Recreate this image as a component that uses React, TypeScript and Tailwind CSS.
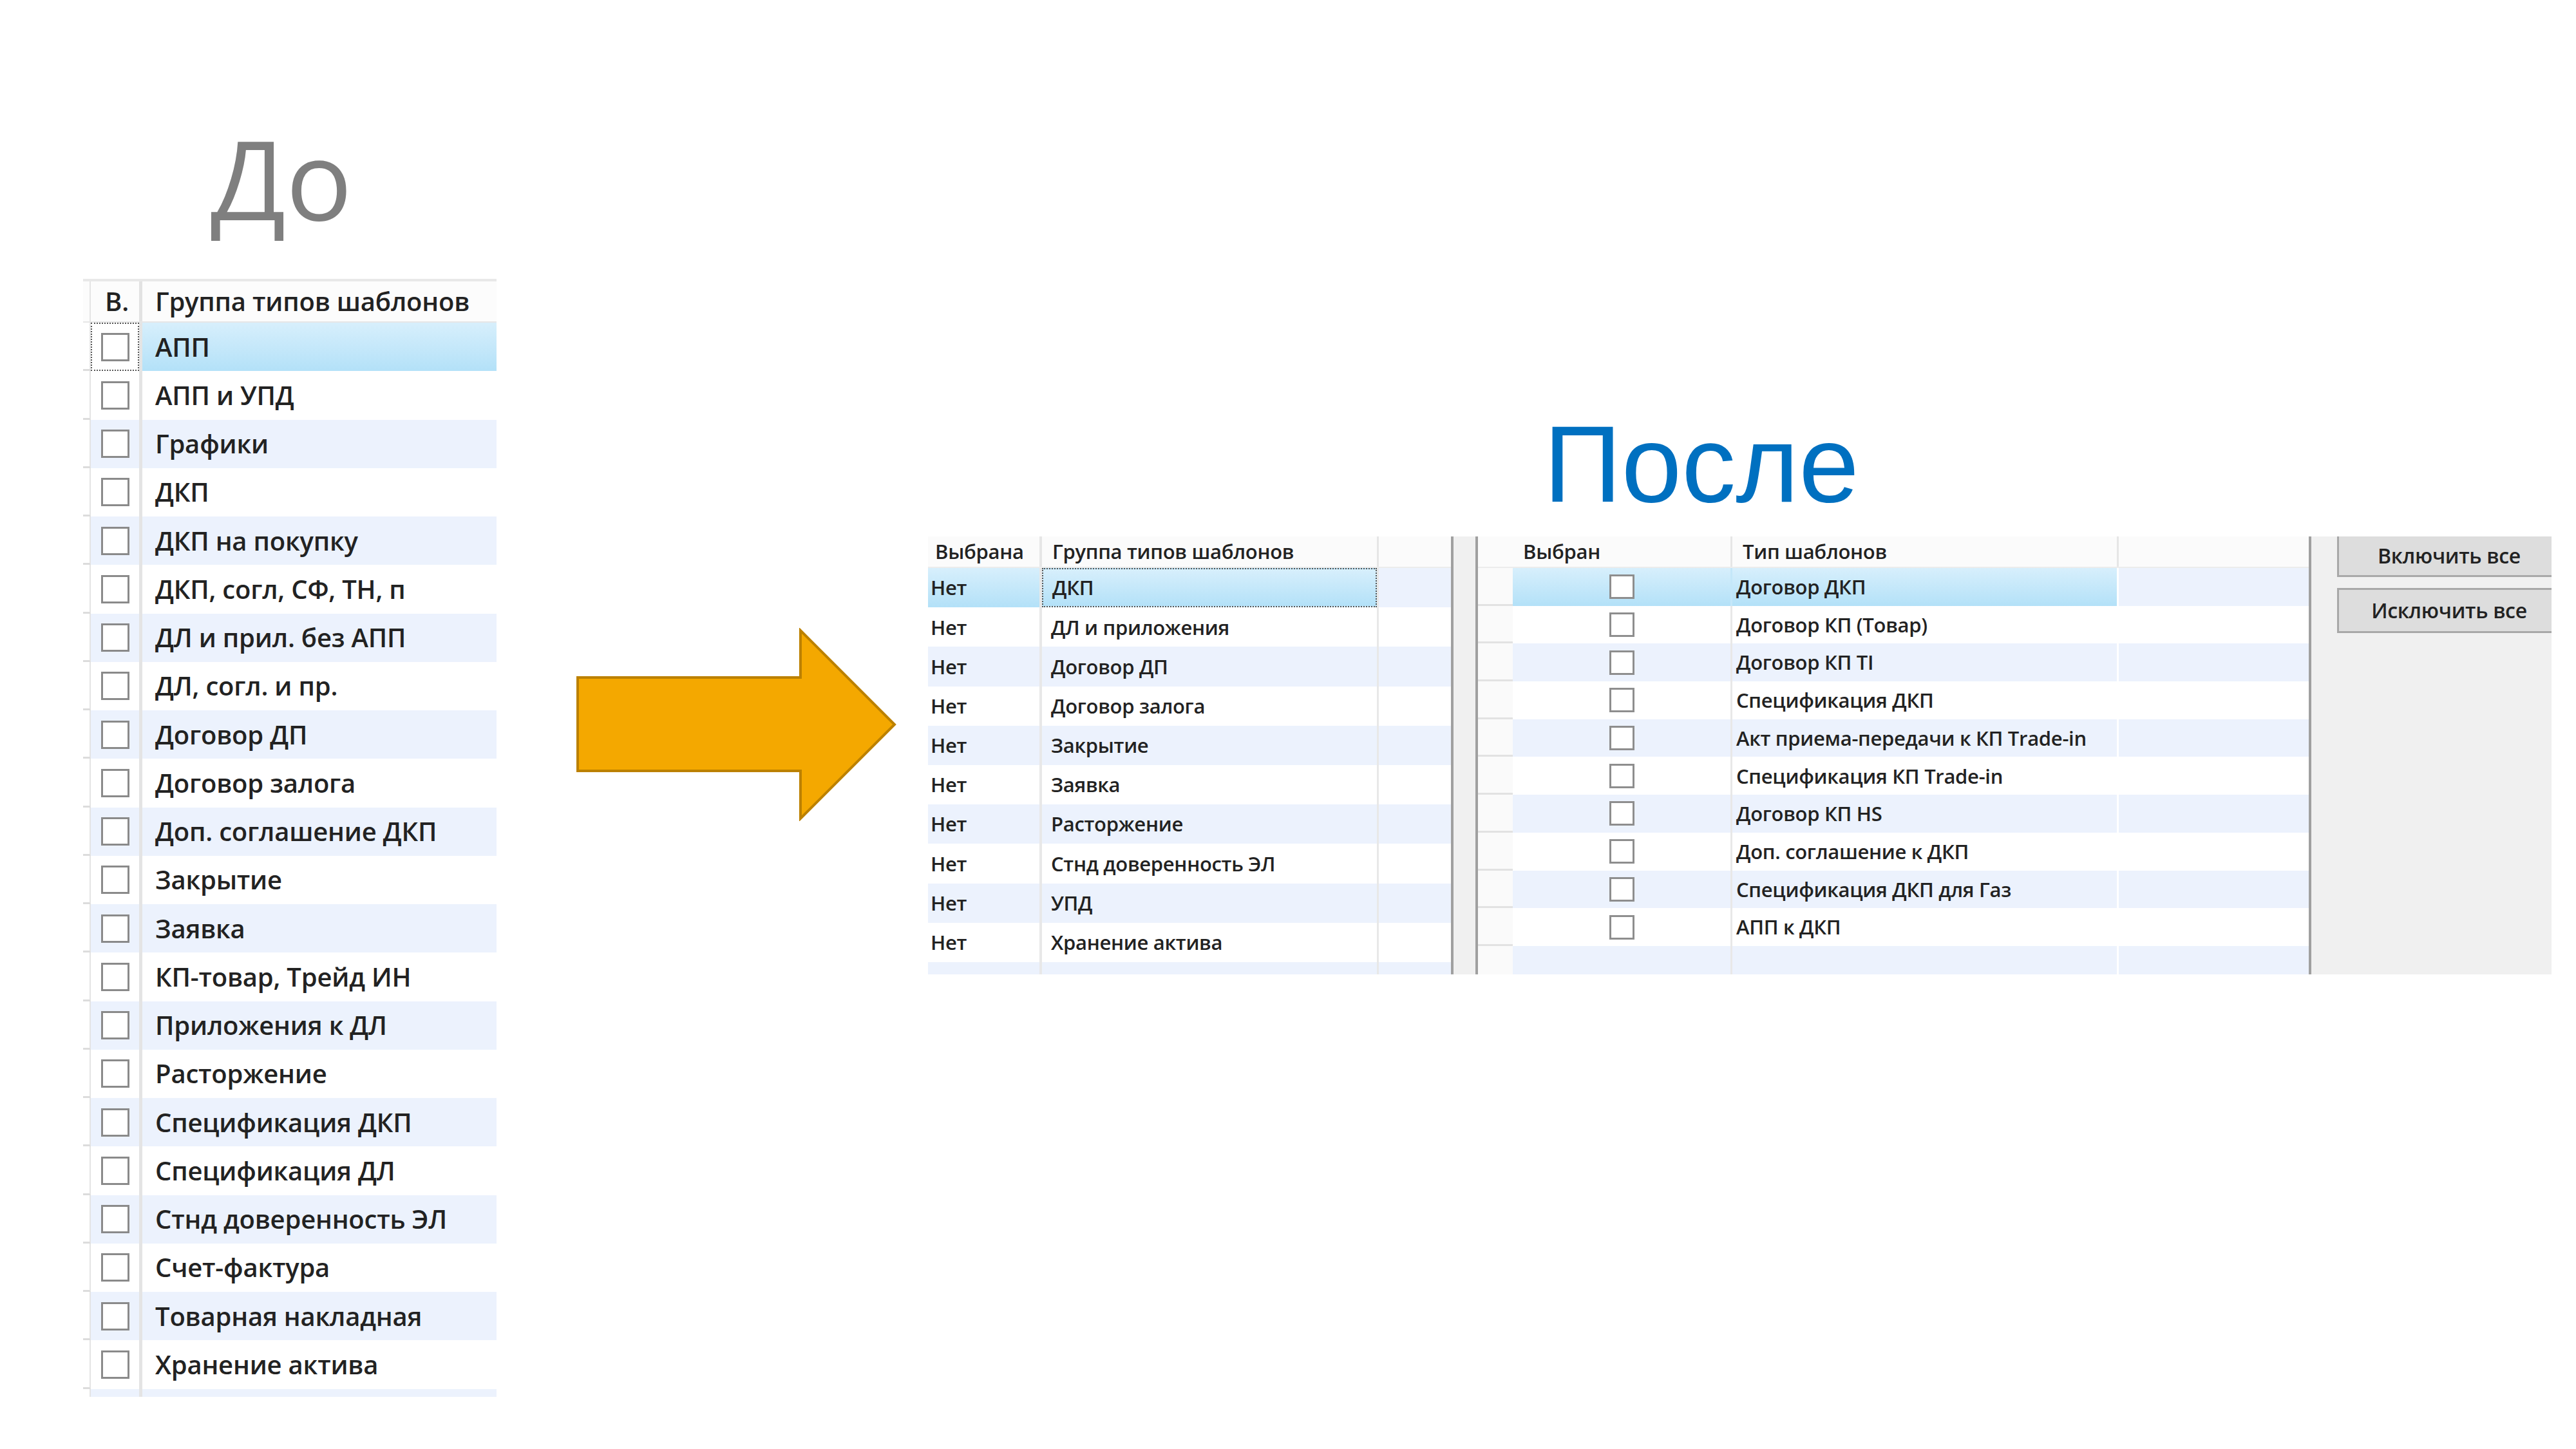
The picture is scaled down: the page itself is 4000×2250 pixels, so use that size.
import React from "react";

const beforeGroups = [
  "АПП",
  "АПП и УПД",
  "Графики",
  "ДКП",
  "ДКП на покупку",
  "ДКП, согл, СФ, ТН, п",
  "ДЛ и прил. без АПП",
  "ДЛ, согл. и пр.",
  "Договор ДП",
  "Договор залога",
  "Доп. соглашение ДКП",
  "Закрытие",
  "Заявка",
  "КП-товар, Трейд ИН",
  "Приложения к ДЛ",
  "Расторжение",
  "Спецификация ДКП",
  "Спецификация ДЛ",
  "Стнд доверенность ЭЛ",
  "Счет-фактура",
  "Товарная накладная",
  "Хранение актива",
];

const afterGroups = [
  "ДКП",
  "ДЛ и приложения",
  "Договор ДП",
  "Договор залога",
  "Закрытие",
  "Заявка",
  "Расторжение",
  "Стнд доверенность ЭЛ",
  "УПД",
  "Хранение актива",
];

const templateTypes = [
  "Договор ДКП",
  "Договор КП (Товар)",
  "Договор КП TI",
  "Спецификация ДКП",
  "Акт приема-передачи к КП Trade-in",
  "Спецификация КП Trade-in",
  "Договор КП HS",
  "Доп. соглашение к ДКП",
  "Спецификация ДКП для Газ",
  "АПП к ДКП",
];

const SELECTED = "bg-linear-to-b from-[#d7effc] to-[#b3e1f8]";

// row colour: even rows are light blue, odd rows white
const rowBg = (i: number) => (i % 2 === 0 ? "bg-[#ecf2fd]" : "bg-white");

const BeforeTable = () => (
  <div className="mt-[72px] w-[642px] border-t-[4px] border-[#e8e8e8] font-['Open_Sans',sans-serif] text-[40px] font-semibold tracking-[-0.2px] text-[#222] overflow-hidden h-[1736px]">
    {/* Header */}
    <div className="flex h-[64px] bg-[#fcfcfc] border-b-2 border-[#e6e6e6]">
      <div className="w-[12px] border-r-2 border-[#e4e4e4]" />
      <div className="w-[75px] flex items-center pl-[22px]">В.</div>
      <div className="w-[5px] bg-[#e2e2e2]" />
      <div className="flex-1 flex items-center pl-[20px] whitespace-nowrap">
        Группа типов шаблонов
      </div>
    </div>

    {[...beforeGroups, ""].map((name, i) => {
      const selected = i === 0;
      return (
        <div key={i} className="flex h-[75.25px]">
          <div className="w-[12px] border-r-2 border-[#e4e4e4] border-b-[3px] border-b-[#dcdcdc] bg-white" />
          <div
            className={`w-[75px] flex items-center justify-center ${
              selected
                ? "bg-white border-2 border-dotted border-[#555]"
                : rowBg(i)
            }`}
          >
            {name && (
              <span className="w-[44px] h-[44px] border-[3px] border-[#8a8a8a] bg-white" />
            )}
          </div>
          <div className="w-[5px] bg-[#e4e4e4]" />
          <div
            className={`flex-1 flex items-center pl-[20px] whitespace-nowrap ${
              selected ? SELECTED : rowBg(i)
            }`}
          >
            {name}
          </div>
        </div>
      );
    })}
  </div>
);

const Arrow = () => (
  <svg
    width="500"
    height="300"
    viewBox="0 0 500 300"
    className="ml-[122px] mt-[975px] shrink-0"
  >
    <polygon
      points="4,77 350,77 350,4 496,150 350,296 350,222 4,222"
      fill="#f4a800"
      stroke="#bc8100"
      strokeWidth="4"
    />
  </svg>
);

const GroupsGrid = () => (
  <div className="w-[812px] flex flex-col overflow-hidden">
    <div className="flex h-[49px] shrink-0 bg-[#fbfbfb] border-b-2 border-[#ececec]">
      <div className="w-[173px] flex items-center pl-[11px]">Выбрана</div>
      <div className="w-[4px] bg-[#e6e6e6]" />
      <div className="w-[520px] flex items-center pl-[16px] whitespace-nowrap">
        Группа типов шаблонов
      </div>
      <div className="w-[3px] bg-[#e6e6e6]" />
      <div className="flex-1" />
    </div>
    {[...afterGroups, ""].map((name, i) => {
      const selected = i === 0;
      return (
        <div key={i} className="flex h-[61.2px] shrink-0">
          <div
            className={`w-[173px] flex items-center pl-[4px] ${
              selected ? SELECTED : rowBg(i)
            }`}
          >
            {name && "Нет"}
          </div>
          <div className="w-[4px] bg-[#e8e8e8]" />
          <div
            className={`w-[520px] flex items-center pl-[14px] whitespace-nowrap ${
              selected
                ? `${SELECTED} border-2 border-dotted border-[#555]`
                : rowBg(i)
            }`}
          >
            {name}
          </div>
          <div className="w-[3px] bg-[#e8e8e8]" />
          <div className={`flex-1 ${rowBg(i)}`} />
        </div>
      );
    })}
  </div>
);

const TypesGrid = () => (
  <div className="w-[1290px] flex flex-col overflow-hidden">
    <div className="flex h-[49px] shrink-0 bg-[#fbfbfb] border-b-2 border-[#ececec]">
      <div className="w-[54px]" />
      <div className="w-[338px] flex items-center pl-[16px]">Выбран</div>
      <div className="w-[3px] bg-[#e6e6e6]" />
      <div className="w-[597px] flex items-center pl-[16px]">Тип шаблонов</div>
      <div className="w-[3px] bg-[#e6e6e6]" />
      <div className="flex-1" />
    </div>
    {[...templateTypes, ""].map((name, i) => {
      const selected = i === 0;
      return (
        <div key={i} className="flex h-[58.7px] shrink-0">
          <div className="w-[54px] bg-[#fafafa] border-b-[3px] border-[#e2e2e2]" />
          <div
            className={`w-[338px] flex items-center justify-center ${
              selected ? SELECTED : rowBg(i)
            }`}
          >
            {name && (
              <span className="w-[39px] h-[38px] border-[3px] border-[#8e8e8e] bg-white" />
            )}
          </div>
          <div
            className={`w-[3px] ${selected ? "bg-[#c4e7f9]" : "bg-[#e8e8e8]"}`}
          />
          <div
            className={`w-[597px] flex items-center pl-[6px] whitespace-nowrap ${
              selected ? SELECTED : rowBg(i)
            }`}
          >
            {name}
          </div>
          <div className="w-[3px] bg-white" />
          <div className={`flex-1 ${rowBg(i)}`} />
        </div>
      );
    })}
  </div>
);

const ButtonPanel = () => (
  <div className="flex-1 bg-[#f0f0f0] overflow-hidden pl-[40px] flex flex-col gap-[17px]">
    <button className="w-[348px] h-[63px] shrink-0 bg-[#dddddd] border-[3px] border-t-0 border-[#a8a8a8] text-[32px] text-[#222]">
      Включить все
    </button>
    <button className="w-[348px] h-[70px] shrink-0 bg-[#dddddd] border-[3px] border-[#a8a8a8] text-[32px] text-[#222]">
      Исключить все
    </button>
  </div>
);

const App = () => {
  return (
    <div className="w-[4000px] h-[2250px] bg-white flex items-start overflow-hidden">
      {/* До */}
      <div className="ml-[129px] w-[642px] shrink-0 flex flex-col">
        <div className="mt-[190px] pl-[198px] h-[171px] leading-none text-[171px] text-[#7f7f7f] font-['Open_Sans',sans-serif]">
          До
        </div>
        <BeforeTable />
      </div>

      <Arrow />

      {/* После */}
      <div className="ml-[48px] w-[2521px] shrink-0 flex flex-col">
        <div className="mt-[637px] pl-[956px] h-[168px] leading-none text-[168px] text-[#0070c0] font-['Liberation_Sans',Arial,sans-serif]">
          После
        </div>
        <div className="mt-[28px] flex h-[680px] font-['Open_Sans',sans-serif] text-[31px] font-semibold tracking-[-0.3px] text-[#222]">
          <GroupsGrid />
          <div className="w-[4px] bg-[#a0a0a0]" />
          <div className="w-[34px] bg-[#f0f0f0]" />
          <div className="w-[4px] bg-[#a0a0a0]" />
          <TypesGrid />
          <div className="w-[4px] bg-[#a0a0a0]" />
          <ButtonPanel />
        </div>
      </div>
    </div>
  );
};

export default App;
